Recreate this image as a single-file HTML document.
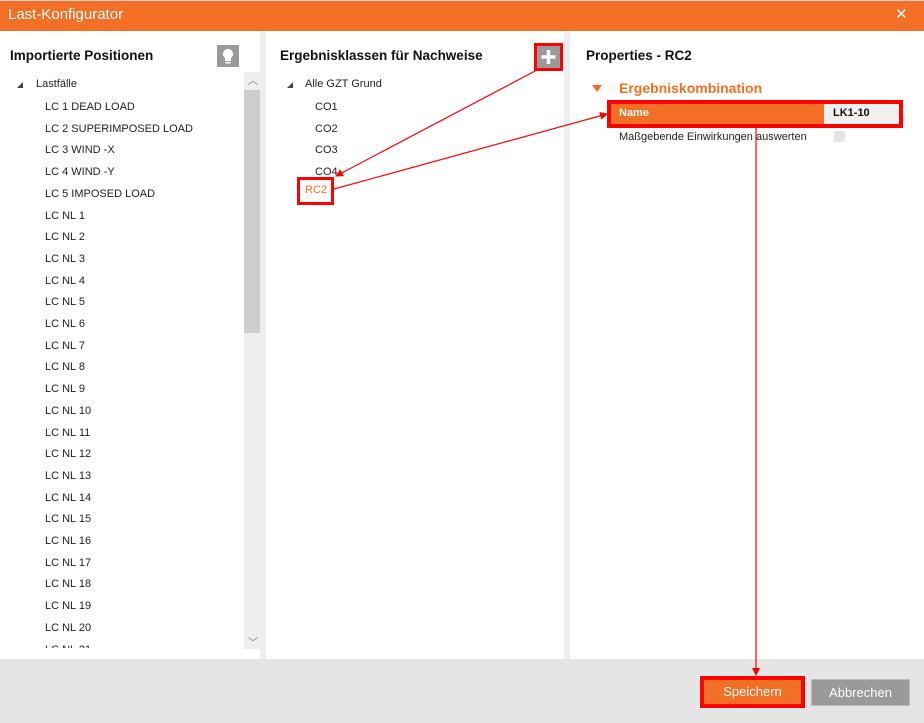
<!DOCTYPE html>
<html><head><meta charset="utf-8"><style>
*{margin:0;padding:0;box-sizing:border-box}
body{width:924px;height:723px;position:relative;overflow:hidden;background:#fff;font-family:"Segoe UI","Liberation Sans","DejaVu Sans",sans-serif;font-size:11px;color:#222}
.a{position:absolute;white-space:nowrap}
.h{font-weight:bold;font-size:13.5px;color:#111}
.tri{position:absolute;width:0;height:0;border-left:6px solid transparent;border-bottom:6px solid #444}
</style></head><body>
<div class="a" style="left:0;top:0;width:924px;height:31px;background:#f26f25;border-top:1px solid #ccc"></div>
<div class="a" style="left:8px;top:6px;color:#fff;font-size:15px">Last-Konfigurator</div>
<div class="a" style="left:895px;top:5px;color:#fff;font-size:15px">✕</div>

<div class="a" style="left:260px;top:31px;width:6px;height:628px;background:#eeeeee"></div>
<div class="a" style="left:564px;top:31px;width:6px;height:628px;background:#eeeeee"></div>
<div class="a" style="left:0;top:659px;width:924px;height:64px;background:#e5e5e5"></div>

<!-- left -->
<div class="a h" style="left:10px;top:48px">Importierte Positionen</div>
<div class="a" style="left:217px;top:45px;width:22px;height:22px;background:#9a9a9a">
<svg width="22" height="22" viewBox="0 0 22 22"><path d="M11 4a5 5 0 0 0-3 9v3h6v-3a5 5 0 0 0-3-9z" fill="#fff"/><rect x="8.5" y="17" width="5" height="1.5" fill="#fff"/></svg></div>
<div class="a" style="left:244px;top:72px;width:16px;height:577px;background:#eeeeee"></div>
<div class="a" style="left:244px;top:90px;width:16px;height:243px;background:#cdcdcd"></div>
<div class="a" style="left:248px;top:72px;font-size:10px;color:#777">︿</div>
<div class="a" style="left:248px;top:634px;font-size:10px;color:#777">﹀</div>
<div class="tri" style="left:17px;top:82px"></div>
<div class="a" style="left:36px;top:78px">Lastfälle</div>
<div class="a" style="left:0;top:0;width:244px;height:648px;overflow:hidden">
<div style="position:absolute;left:45px;top:97px;line-height:21.7px">
LC 1 DEAD LOAD<br>LC 2 SUPERIMPOSED LOAD<br>LC 3 WIND -X<br>LC 4 WIND -Y<br>LC 5 IMPOSED LOAD<br>LC NL 1<br>LC NL 2<br>LC NL 3<br>LC NL 4<br>LC NL 5<br>LC NL 6<br>LC NL 7<br>LC NL 8<br>LC NL 9<br>LC NL 10<br>LC NL 11<br>LC NL 12<br>LC NL 13<br>LC NL 14<br>LC NL 15<br>LC NL 16<br>LC NL 17<br>LC NL 18<br>LC NL 19<br>LC NL 20<br>LC NL 21</div></div>

<!-- middle -->
<div class="a h" style="left:280px;top:48px">Ergebnisklassen für Nachweise</div>
<div class="a" style="left:534px;top:43px;width:29px;height:28px;border:3px solid #f00;background:#9a9a9a">
<svg width="23" height="22" viewBox="0 0 23 22"><path d="M11.5 4v14M4.5 11h14" stroke="#fff" stroke-width="3.5"/></svg></div>
<div class="tri" style="left:287px;top:82px"></div>
<div class="a" style="left:305px;top:78px">Alle GZT Grund</div>
<div class="a" style="left:315px;top:97px;line-height:21.7px">CO1<br>CO2<br>CO3<br>CO4</div>
<div class="a" style="left:297px;top:177px;width:37px;height:28px;border:3px solid #f00"></div>
<div class="a" style="left:305px;top:184px;color:#f26f25">RC2</div>

<!-- right -->
<div class="a h" style="left:586px;top:48px">Properties - RC2</div>
<div class="a" style="left:592px;top:85px;width:0;height:0;border-left:5px solid transparent;border-right:5px solid transparent;border-top:7px solid #f26f25"></div>
<div class="a" style="left:619px;top:80px;color:#f26f25;font-weight:bold;font-size:14px">Ergebniskombination</div>
<div class="a" style="left:607px;top:100px;width:296px;height:28px;border:4px solid #f00;background:#f0f0f0"></div>
<div class="a" style="left:611px;top:104px;width:213px;height:20px;background:#f26f25"></div>
<div class="a" style="left:619px;top:107px;color:#fff;font-weight:bold">Name</div>
<div class="a" style="left:833px;top:107px;font-weight:bold;color:#111">LK1-10</div>
<div class="a" style="left:619px;top:131px">Maßgebende Einwirkungen auswerten</div>
<div class="a" style="left:834px;top:131px;width:11px;height:11px;background:#e4e4e4;border-radius:2px"></div>

<!-- buttons -->
<div class="a" style="left:700px;top:676px;width:105px;height:32px;border:4px solid #f00;background:#f26f25;color:#fff;text-align:center;line-height:24px;font-size:13px">Speichern</div>
<div class="a" style="left:811px;top:679px;width:99px;height:27px;background:#9a9a9a;border:1px solid #bbb;color:#fff;text-align:center;line-height:25px;font-size:13px">Abbrechen</div>

<svg class="a" style="left:0;top:0" width="924" height="723">
<defs><marker id="m" markerWidth="8" markerHeight="8" refX="7" refY="4" orient="auto" markerUnits="userSpaceOnUse"><path d="M0 0L8 4L0 8z" fill="#f00"/></marker></defs>
<line x1="537" y1="70" x2="336" y2="176" stroke="#f00" stroke-width="1.2" marker-end="url(#m)"/>
<line x1="334" y1="189" x2="607" y2="114" stroke="#f00" stroke-width="1.2" marker-end="url(#m)"/>
<line x1="756" y1="128" x2="756" y2="675" stroke="#f00" stroke-width="1.2" marker-end="url(#m)"/>
</svg>
</body></html>
